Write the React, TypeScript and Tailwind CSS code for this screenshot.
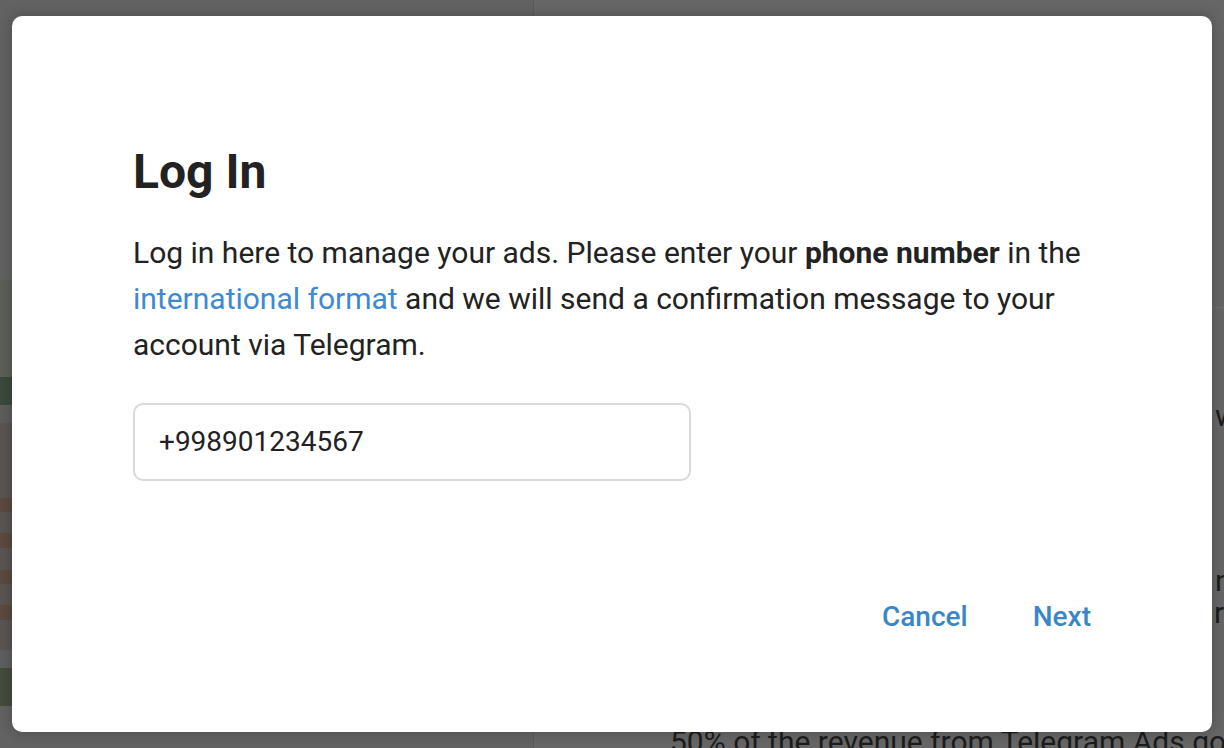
import React from "react";

const stripe = [
  { h: 280, c: "bg-[#626262]" },
  { h: 97, c: "bg-[#5c5e58]" },
  { h: 28, c: "bg-[#3b4a3c]" },
  { h: 18, c: "bg-[#5d5d5e]" },
  { h: 75, c: "bg-[#5a5553]" },
  { h: 14, c: "bg-[#5b4a40]" },
  { h: 21, c: "bg-[#5a5553]" },
  { h: 15, c: "bg-[#5b4a40]" },
  { h: 22, c: "bg-[#5a5553]" },
  { h: 14, c: "bg-[#5b4a40]" },
  { h: 21, c: "bg-[#5a5553]" },
  { h: 15, c: "bg-[#5b4a40]" },
  { h: 30, c: "bg-[#5a5553]" },
  { h: 18, c: "bg-[#5d5e60]" },
  { h: 38, c: "bg-[#444c3c]" },
  { h: 42, c: "bg-[#626262]" },
];

export default function App() {
  return (
    <div
      className="relative w-[1224px] h-[748px] overflow-hidden bg-[#666666]"
      style={{ fontFamily: "Roboto, 'Noto Sans', sans-serif" }}
    >
      {/* dimmed page behind */}
      <div className="flex h-full w-full">
        <div className="flex flex-col w-[533px] shrink-0">
          {stripe.map((s, i) => (
            <div key={i} className={`${s.c} w-full`} style={{ height: s.h }} />
          ))}
        </div>
        <div className="flex flex-col flex-1 border-l border-[#5a5a5a] bg-[#666666] text-[30px] text-[#1c1c1c]">
          <div className="h-[308px] border-b border-[#707070] shrink-0" />
          <div className="h-[88px] shrink-0" />
          <div className="h-[40px] shrink-0 pl-[681px] whitespace-nowrap leading-[40px]">w</div>
          <div className="h-[128px] shrink-0" />
          <div className="h-[32px] shrink-0 pl-[681px] whitespace-nowrap leading-[34px]">n</div>
          <div className="h-[36px] shrink-0 pl-[680px] whitespace-nowrap leading-[34px]">re</div>
          <div className="h-[92px] shrink-0" />
          <div className="pl-[136px] whitespace-nowrap leading-[36px] shrink-0">
            50% of the revenue from Telegram Ads goes to
          </div>
        </div>
      </div>

      {/* modal */}
      <div className="absolute left-[12px] right-[12px] top-[16px] bottom-[16px] rounded-[10px] bg-white shadow-[0_0_14px_rgba(0,0,0,0.25)] px-[121px] pt-[128px] text-[#222222]">
        <h1 className="text-[48px] leading-[56px] font-bold">Log In</h1>
        <p className="mt-[30px] text-[30px] leading-[46px]">
          Log in here to manage your ads. Please enter your{" "}
          <b className="font-bold">phone number</b> in the{" "}
          <span className="text-[#3d8ad3]">international format</span> and we
          will send a confirmation message to your account via Telegram.
        </p>
        <div className="mt-[35px] w-[558px] h-[78px] rounded-[10px] border-2 border-[#d9d9d9] flex items-center pl-[24px] text-[28px]">
          +998901234567
        </div>
        <div className="mt-[119px] flex justify-end gap-[65px] text-[28px] leading-[34px] font-medium text-[#3b86c6]">
          <span>Cancel</span>
          <span>Next</span>
        </div>
      </div>
    </div>
  );
}
